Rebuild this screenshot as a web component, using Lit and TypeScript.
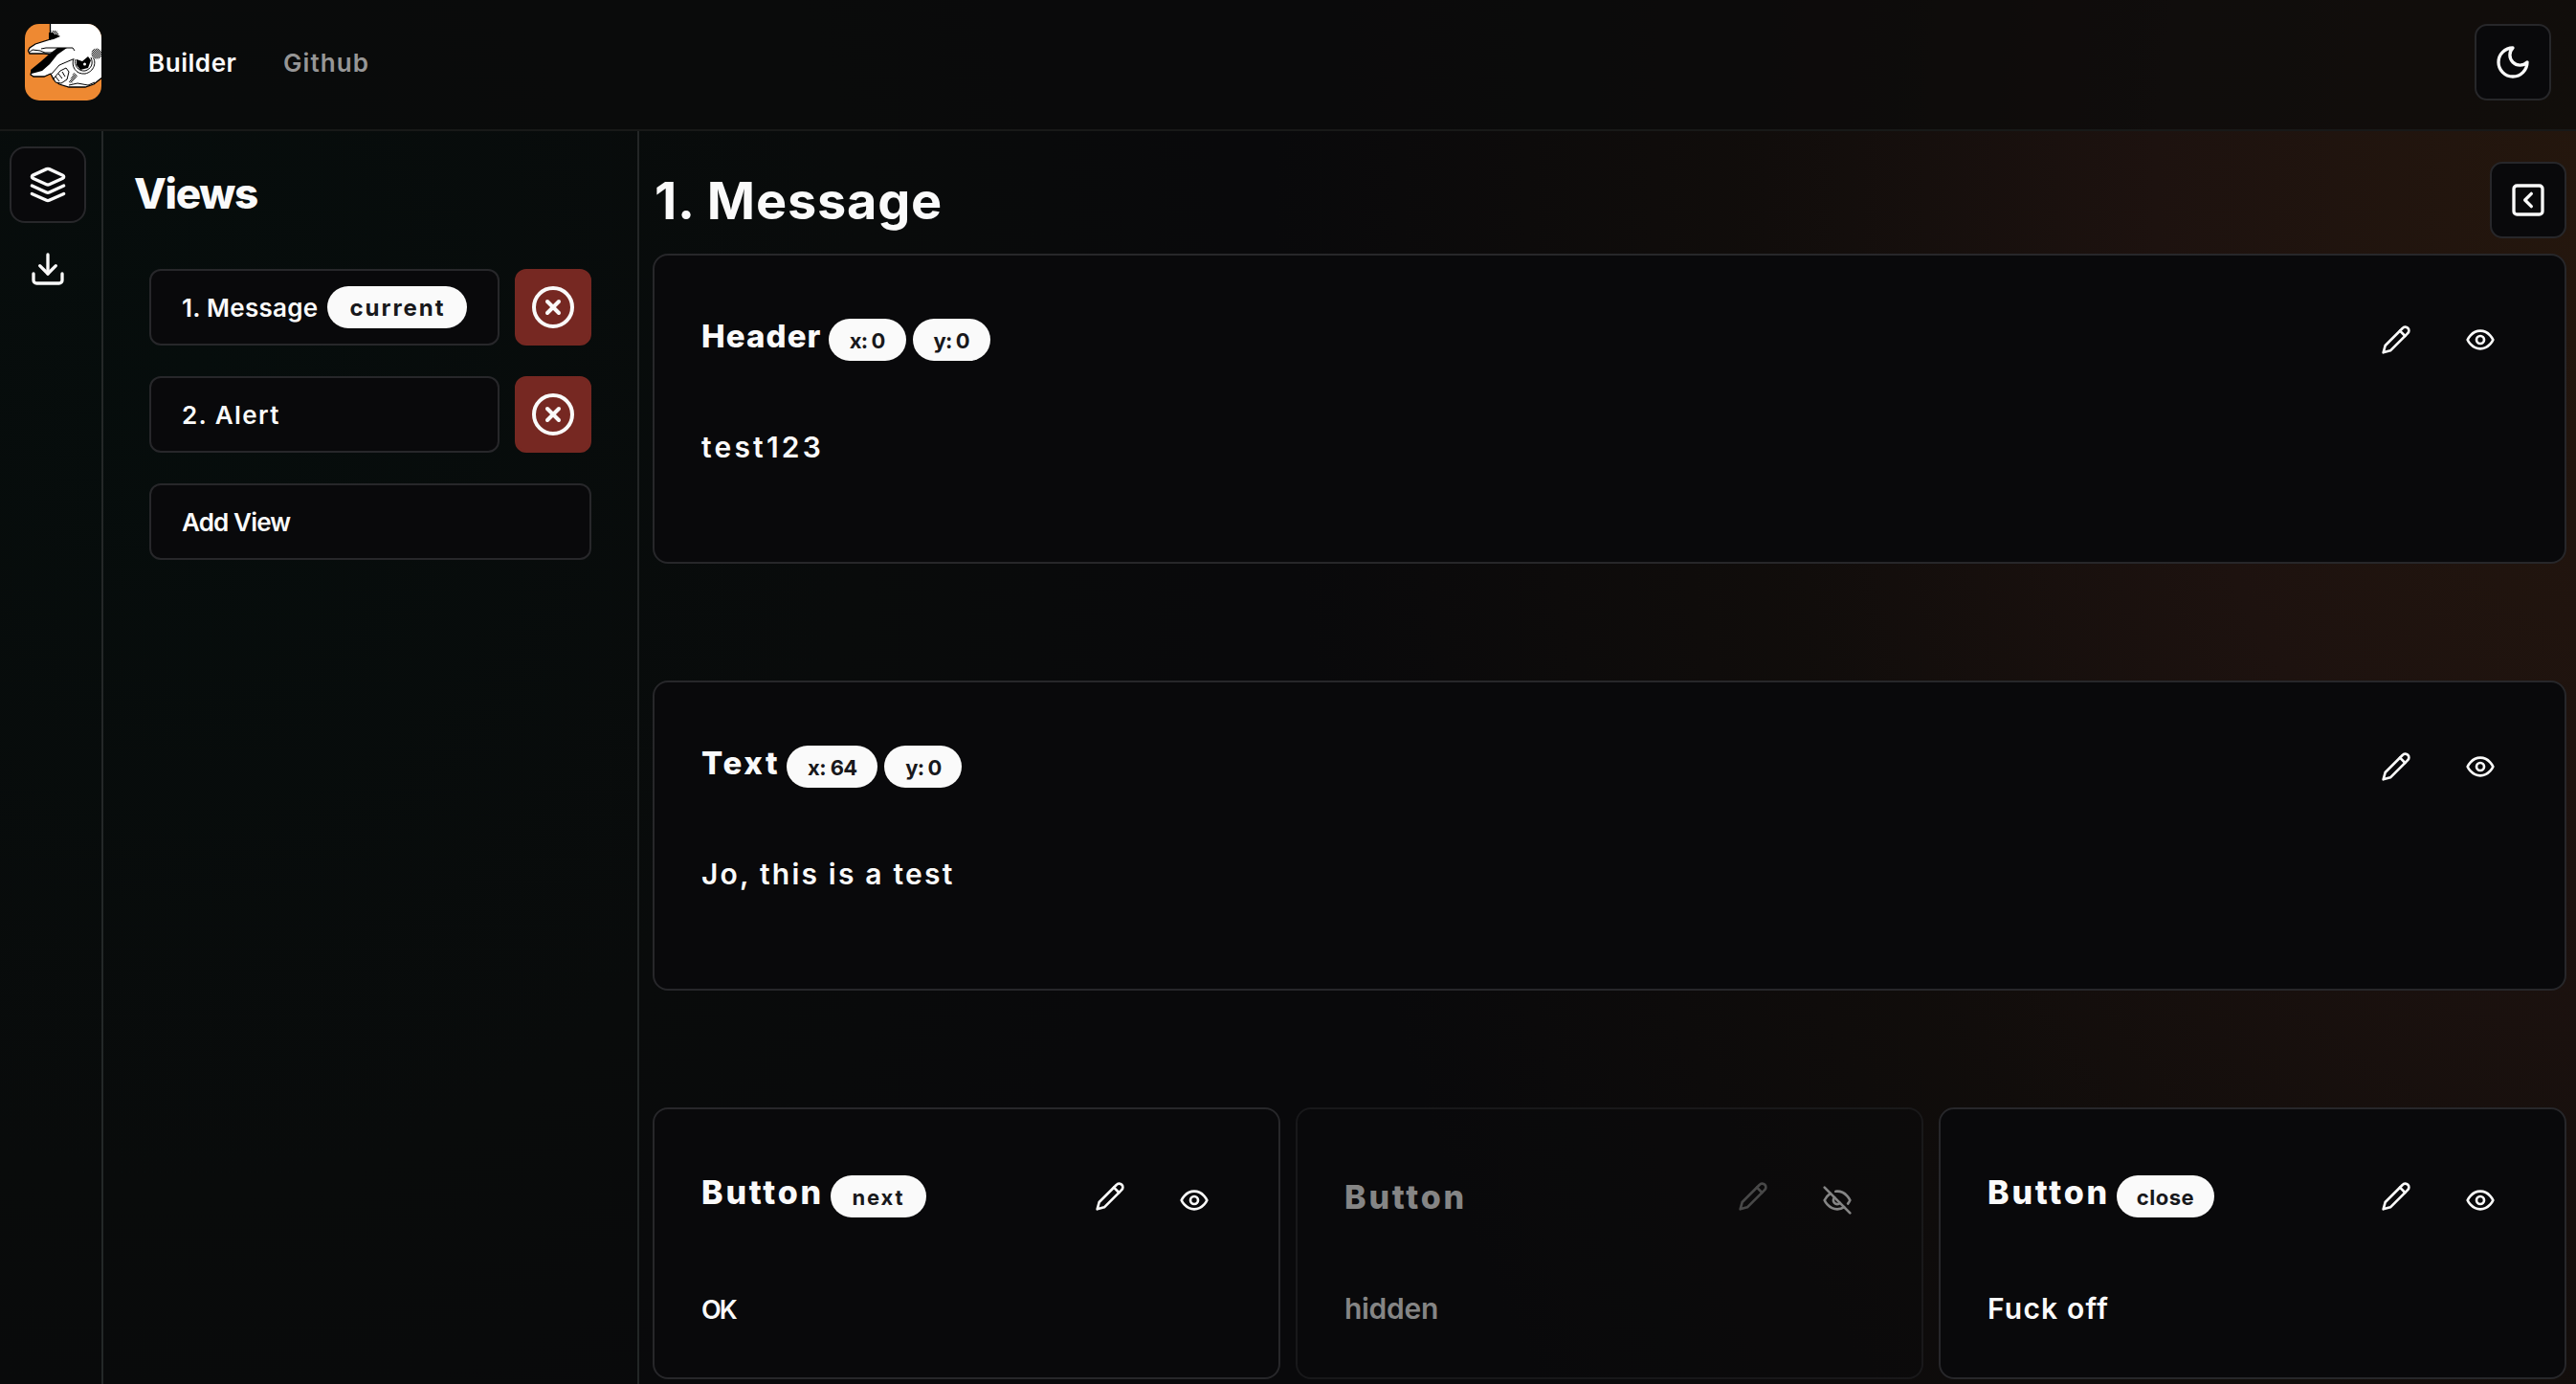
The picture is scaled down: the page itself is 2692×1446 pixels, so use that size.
import { LitElement, html, svg, css, nothing } from "lit";
import { customElement, property } from "lit/decorators.js";

const paths: Record<string, unknown> = {
  moon: svg`<path d="M12 3a6 6 0 0 0 9 9 9 9 0 1 1-9-9Z"/>`,
  layers: svg`<path d="m12.83 2.18a2 2 0 0 0-1.66 0L2.6 6.08a1 1 0 0 0 0 1.83l8.58 3.91a2 2 0 0 0 1.66 0l8.58-3.9a1 1 0 0 0 0-1.83Z"/><path d="m22 17.65-9.17 4.16a2 2 0 0 1-1.66 0L2 17.65"/><path d="m22 12.65-9.17 4.16a2 2 0 0 1-1.66 0L2 12.65"/>`,
  download: svg`<path d="M21 15v4a2 2 0 0 1-2 2H5a2 2 0 0 1-2-2v-4"/><path d="m7 10 5 5 5-5"/><path d="M12 15V3"/>`,
  circleX: svg`<circle cx="12" cy="12" r="10"/><path d="m15 9-6 6"/><path d="m9 9 6 6"/>`,
  squareLeft: svg`<rect width="18" height="18" x="3" y="3" rx="2"/><path d="m14 16-4-4 4-4"/>`,
  pencil: svg`<path d="M17 3a2.85 2.83 0 1 1 4 4L7.5 20.5 2 22l1.5-5.5Z"/><path d="m15 5 4 4"/>`,
  eye: svg`<path d="M2 12s3-7 10-7 10 7 10 7-3 7-10 7-10-7-10-7Z"/><circle cx="12" cy="12" r="3"/>`,
  eyeOff: svg`<path d="M9.88 9.88a3 3 0 1 0 4.24 4.24"/><path d="M10.73 5.08A10.43 10.43 0 0 1 12 5c7 0 10 7 10 7a13.16 13.16 0 0 1-1.67 2.68"/><path d="M6.61 6.61A13.526 13.526 0 0 0 2 12s3 7 10 7a9.74 9.74 0 0 0 5.39-1.61"/><path d="m2 2 20 20"/>`,
};

@customElement("ui-icon")
export class UiIcon extends LitElement {
  @property() name = "";
  static styles = css`
    :host { display: inline-flex; width: 40px; height: 40px; flex: none; }
    svg { width: 100%; height: 100%; fill: none; stroke: currentColor; stroke-width: 2; stroke-linecap: round; stroke-linejoin: round; }
  `;
  render() {
    return html`<svg viewBox="0 0 24 24">${paths[this.name]}</svg>`;
  }
}

@customElement("brand-logo")
export class BrandLogo extends LitElement {
  static styles = css`
    :host { display: block; width: 80px; height: 80px; border-radius: 15px; overflow: hidden; flex: none; }
    svg { display: block; width: 80px; height: 80px; }
  `;
  render() {
    return html`<svg viewBox="0 0 80 80">
      <defs>
        <pattern id="dither" width="2" height="2" patternUnits="userSpaceOnUse">
          <rect width="2" height="2" fill="#fff"/><rect width="1" height="1" fill="#000"/><rect x="1" y="1" width="1" height="1" fill="#000"/>
        </pattern>
      </defs>
      <rect width="80" height="80" fill="#ee8932"/>
      <path d="M26.5 -2V16L11 21 5 25 3.500 28 5 31H20L29 32 7 49 6 53 9 55H20L27 52 30 58 36 63 46 66H63L72 63 82 55V-2Z" fill="#fff" stroke="#000" stroke-width="1.300"/>
      <path d="M25 9H30L37 13 30 16 25 17Z" fill="#000"/>
      <path d="M27 7H33L36 11H31Z" fill="url(#dither)"/>
      <path d="M4 30 8 27 16 28 21 30 28 30" fill="none" stroke="#000" stroke-width="1"/>
      <path d="M17 26 22 25H50L52 28" fill="none" stroke="#000" stroke-width="1"/>
      <path d="M34 25H44L34 32 26 42 18 49 7 52 6 48 17 39 26 31Z" fill="#000"/>
      <path d="M48 27 40 30 32 36 25 44 18 51 8 52 12 54 20 54 30 49 40 40 50 34Z" fill="#fff"/>
      <path d="M28 52 36 43 50 37" fill="none" stroke="#000" stroke-width="1"/>
      <path d="M51 36C48 44 53 53 63 52 72 50 76 40 70 33" fill="none" stroke="#000" stroke-width="1"/>
      <path d="M53 37C51 43 56 50 63 49 69 47 72 42 69 35" fill="none" stroke="#000" stroke-width="1"/>
      <path d="M54 37 60 39 66 34 69 38 66 46 58 48 54 43Z" fill="#000"/>
      <circle cx="62.500" cy="42" r="1.500" fill="#fff"/>
      <circle cx="75" cy="31" r="5.500" fill="url(#dither)"/>
      <path d="M30 57 37 49 43 46 46 50 44 58 38 62 32 61Z" fill="#fff" stroke="#000"/>
      <path d="m32 55 4 5M35 52l4 5M39 50l3 5" stroke="#000" fill="none"/>
      <path d="m51 51 4 3-6 8-3-1Z" fill="url(#dither)"/>
      <path d="M46 64 55 62 66 64 73 61" fill="none" stroke="#000" stroke-width="1"/>
    </svg>`;
  }
}

interface Block {
  kind: string;
  title: string;
  text: string;
  textClass: string;
  badges: { label: string; cls: string }[];
  hidden?: boolean;
}

const wide: Block[] = [
  { kind: "header", title: "Header", text: "test123", textClass: "t-test", badges: [{ label: "x: 0", cls: "b-xy" }, { label: "y: 0", cls: "b-xy" }] },
  { kind: "text", title: "Text", text: "Jo, this is a test", textClass: "t-jo", badges: [{ label: "x: 64", cls: "b-x64" }, { label: "y: 0", cls: "b-xy" }] },
];

const buttons: Block[] = [
  { kind: "button", title: "Button", text: "OK", textClass: "t-ok", badges: [{ label: "next", cls: "b-next" }] },
  { kind: "button", title: "Button", text: "hidden", textClass: "t-hidden", badges: [], hidden: true },
  { kind: "button", title: "Button", text: "Fuck off", textClass: "t-off", badges: [{ label: "close", cls: "b-close" }] },
];

@customElement("app-root")
export class AppRoot extends LitElement {
  static styles = css`
    :host { display: block; }
    * { box-sizing: border-box; }
    .page {
      width: 100%; height: 1446px; overflow: hidden; display: flex; flex-direction: column;
      color: #fafafa; font-family: Inter, "DejaVu Sans", sans-serif; font-weight: 600; white-space: nowrap;
      background:
        radial-gradient(ellipse 1420px 2100px at 2750px 200px, #25170d 0, #1d120f 35%, rgba(19, 14, 11, 0.75) 65%, rgba(9, 9, 11, 0) 100%),
        radial-gradient(ellipse 1100px 1300px at 200px 400px, #060d0c 0, #090b0b 65%, rgba(9, 9, 11, 0) 100%),
        #09090b;
    }
    .top { height: 137px; flex: none; display: flex; align-items: center; padding: 0 26px 5px; border-bottom: 2px solid #181918; background: rgba(11, 11, 11, 0.72); }
    .nav { display: flex; margin-left: 49px; font-size: 26px; line-height: 32px; flex: 1; gap: 49px; padding-top: 1px; }
    .nav .link { width: 92px; }
    .muted { color: #969696; }
    .square { width: 80px; height: 80px; flex: none; border: 2px solid #27272a; border-radius: 13px; background: #09090b; display: flex; align-items: center; justify-content: center; }
    .body { flex: 1; min-height: 0; display: flex; }
    .rail { width: 108px; flex: none; border-right: 2px solid #242828; padding: 16px 0 0 10px; display: flex; flex-direction: column; gap: 8px; }
    .rail .square { border-radius: 16px; }
    .rail .plain { background: none; border-color: transparent; }
    .side { width: 560px; flex: none; border-right: 2px solid #232626; padding: 35px 48px 0; }
    .side h2 { margin: 0 0 0 -16px; font-size: 44px; line-height: 60px; font-weight: 800; }
    .views { display: flex; flex-direction: column; gap: 32px; margin-top: 49px; }
    .view { display: flex; gap: 16px; }
    .entry { flex: 1; height: 80px; border: 2px solid #27272a; border-radius: 12px; background: #09090b; display: flex; align-items: center; padding: 0 32px; font-size: 26px; }
    .danger { background: #762822; border-color: #762822; border-radius: 12px; }
    .danger ui-icon { width: 48px; height: 48px; }
    .badge { height: 44px; flex: none; border-radius: 22px; background: #fafafa; color: #18181b; font-size: 22px; font-weight: 700; display: inline-flex; align-items: center; justify-content: center; padding-top: 1px; }
    .main { flex: 1; min-width: 0; padding: 32px 10px 0 14px; }
    .heading { display: flex; justify-content: space-between; height: 80px; margin-bottom: 16px; }
    .heading h1 { margin: 7px 0 0 2px; font-size: 54px; line-height: 68px; font-weight: 700; }
    .stack { display: flex; flex-direction: column; gap: 122px; }
    .row { display: grid; grid-template-columns: repeat(3, 1fr); gap: 16px; }
    .card { height: 324px; border: 2px solid #27272a; border-radius: 16px; background: #09090b; padding: 50px 44px 0 49px; }
    .row .card { height: 284px; padding-top: 53px; }
    .head { display: flex; height: 80px; }
    .name { display: flex; gap: 7px; flex: 1; align-items: flex-start; padding-top: 16px; }
    .name h3 { margin: -2px 0 0; font-size: 33px; line-height: 40px; font-weight: 800; }
    .act { width: 88px; height: 76px; display: flex; align-items: center; justify-content: center; }
    .act ui-icon { width: 32px; height: 32px; }
    .row .act.vis { height: 84px; }
    .text { font-size: 30px; line-height: 40px; font-weight: 600; margin-top: 50px; }
    .row .text { margin-top: 55px; }
    .off { background: rgba(9, 9, 11, 0.5); border-color: rgba(39, 39, 42, 0.5); color: #858585; }
    .off .name h3 { margin-top: 3px; }
    .off .edit { color: #484848; }

    .c-builder { letter-spacing: 0.55px; }
    .c-github { letter-spacing: 1.1px; }
    .c-views { letter-spacing: -1.3px; }
    .c-title { letter-spacing: 0.8px; }
    .c-v1 { width: 152px; letter-spacing: 0.25px; }
    .c-v2 { letter-spacing: 1.4px; }
    .c-add { letter-spacing: -0.85px; }
    .b-current { width: 146px; font-size: 24px; letter-spacing: 2px; padding-left: 1px; }
    .b-xy { width: 81px; letter-spacing: -0.9px; }
    .b-x64 { width: 95px; letter-spacing: -0.6px; }
    .b-next { width: 100px; letter-spacing: 1.9px; }
    .b-close { width: 102px; letter-spacing: 0.5px; }
    .k-header { letter-spacing: 1.1px; }
    .k-text { letter-spacing: 2.7px; }
    .k-button { font-size: 34px; letter-spacing: 2.8px; }
    .name .k-button { font-size: 34px; }
    .t-test { letter-spacing: 3.2px; }
    .t-jo { letter-spacing: 2.2px; }
    .t-ok { font-size: 27px; letter-spacing: -2px; }
    .t-hidden { letter-spacing: -0.3px; }
    .t-off { letter-spacing: 1.2px; }
  `;

  private card(b: Block) {
    return html`<article class="card ${b.hidden ? "off" : ""}">
      <div class="head">
        <div class="name">
          <h3 class="k-${b.kind}">${b.title}</h3>
          ${b.badges.map((x) => html`<span class="badge ${x.cls}">${x.label}</span>`)}
        </div>
        <div class="act edit"><ui-icon name="pencil"></ui-icon></div>
        <div class="act vis"><ui-icon name=${b.hidden ? "eyeOff" : "eye"}></ui-icon></div>
      </div>
      <div class="text"><span class=${b.textClass}>${b.text}</span></div>
    </article>`;
  }

  private view(label: string, cls: string, current: boolean) {
    return html`<div class="view">
      <div class="entry"><span class=${cls}>${label}</span>${current ? html`<span class="badge b-current">current</span>` : nothing}</div>
      <div class="square danger"><ui-icon name="circleX"></ui-icon></div>
    </div>`;
  }

  render() {
    return html`<div class="page">
      <header class="top">
        <brand-logo></brand-logo>
        <nav class="nav"><span class="link c-builder">Builder</span><span class="link muted c-github">Github</span></nav>
        <div class="square"><ui-icon name="moon"></ui-icon></div>
      </header>
      <div class="body">
        <div class="rail">
          <div class="square"><ui-icon name="layers"></ui-icon></div>
          <div class="square plain"><ui-icon name="download"></ui-icon></div>
        </div>
        <aside class="side">
          <h2><span class="c-views">Views</span></h2>
          <div class="views">
            ${this.view("1. Message", "c-v1", true)}
            ${this.view("2. Alert", "c-v2", false)}
            <div class="view"><div class="entry"><span class="c-add">Add View</span></div></div>
          </div>
        </aside>
        <main class="main">
          <div class="heading">
            <h1><span class="c-title">1. Message</span></h1>
            <div class="square"><ui-icon name="squareLeft"></ui-icon></div>
          </div>
          <div class="stack">
            ${wide.map((b) => this.card(b))}
            <div class="row">${buttons.map((b) => this.card(b))}</div>
          </div>
        </main>
      </div>
    </div>`;
  }
}
